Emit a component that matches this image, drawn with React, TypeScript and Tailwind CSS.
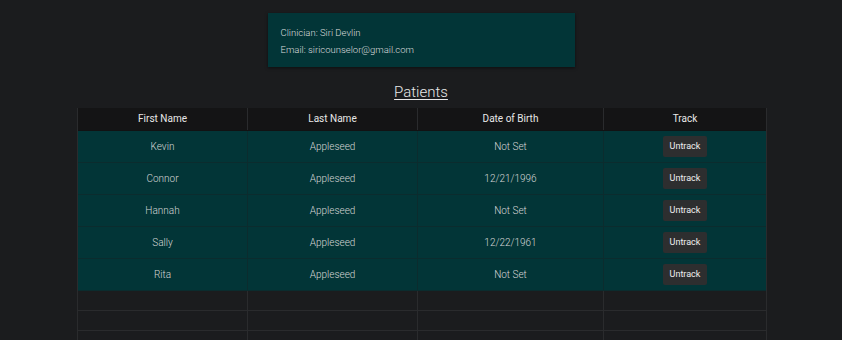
import React from "react";

const patients = [
  { first: "Kevin", last: "Appleseed", dob: "Not Set" },
  { first: "Connor", last: "Appleseed", dob: "12/21/1996" },
  { first: "Hannah", last: "Appleseed", dob: "Not Set" },
  { first: "Sally", last: "Appleseed", dob: "12/22/1961" },
  { first: "Rita", last: "Appleseed", dob: "Not Set" },
];

export default function App() {
  return (
    <div
      className="w-[842px] h-[340px] overflow-hidden bg-[#1b1c1e] text-[#e6e6e6]"
      style={{ fontFamily: "Roboto, 'Noto Sans', sans-serif" }}
    >
      <div className="flex flex-col items-center pt-[13px]">
        <div className="w-[307px] h-[54px] bg-[#023537] shadow-[0_1px_3px_rgba(0,0,0,0.5)] pl-[13px] pt-[14px] flex flex-col gap-[5px] text-[9.5px] font-light text-[#dcdcdc] leading-[12px]">
          <div>Clinician: Siri Devlin</div>
          <div>Email: siricounselor@gmail.com</div>
        </div>
        <div className="mt-[16px] text-[15px] font-light underline underline-offset-[2px] leading-[18px] text-[#e8e8e8]">
          Patients
        </div>
      </div>
      <div className="ml-[77px] mt-[7px] w-[690px] border-l border-r border-[#2a2b2d]">
        <div className="grid grid-cols-[170px_170px_186px_1fr] h-[22px] bg-[#141415] text-[10px] text-[#e8e8e8] leading-[22px] text-center">
          <div className="border-r border-[#2a2b2d]">First Name</div>
          <div className="border-r border-[#2a2b2d]">Last Name</div>
          <div className="border-r border-[#2a2b2d]">Date of Birth</div>
          <div>Track</div>
        </div>
        <div className="h-px bg-[#111213]" />
        {patients.map((p) => (
          <div
            key={p.first}
            className="grid grid-cols-[170px_170px_186px_1fr] h-[32px] bg-[#023537] border-b border-[#0b2c2e] text-[10px] font-light text-[#d6d6d6] text-center items-stretch"
          >
            <div className="border-r border-[#0b2c2e] flex items-center justify-center">{p.first}</div>
            <div className="border-r border-[#0b2c2e] flex items-center justify-center">{p.last}</div>
            <div className="border-r border-[#0b2c2e] flex items-center justify-center">{p.dob}</div>
            <div className="flex items-center justify-center">
              <button className="h-[21px] w-[44px] bg-[#2d2e2f] text-[9px] font-normal text-[#f0f0f0] rounded-[2px]">
                Untrack
              </button>
            </div>
          </div>
        ))}
        {[0, 1, 2].map((i) => (
          <div
            key={i}
            className="grid grid-cols-[170px_170px_186px_1fr] h-[20px] border-b border-[#2a2b2d]"
          >
            <div className="border-r border-[#2a2b2d]" />
            <div className="border-r border-[#2a2b2d]" />
            <div className="border-r border-[#2a2b2d]" />
            <div />
          </div>
        ))}
      </div>
    </div>
  );
}
